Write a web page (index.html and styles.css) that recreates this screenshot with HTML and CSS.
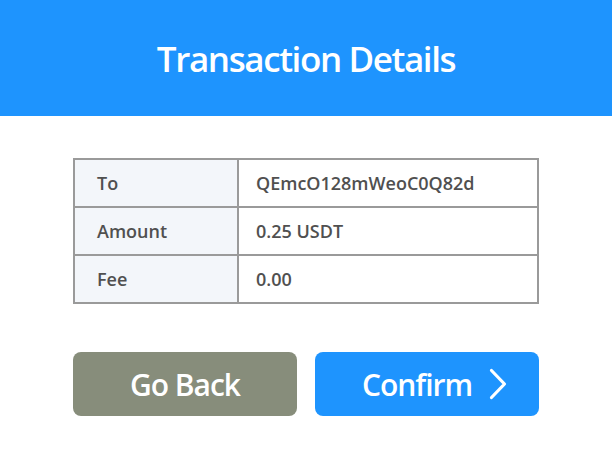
FILE: index.html
```html
<!DOCTYPE html>
<html lang="en">
<head>
<meta charset="utf-8">
<title>Transaction Details</title>
<link rel="stylesheet" href="styles.css">
</head>
<body>
<header class="topbar">
  <h1 class="title">Transaction Details</h1>
</header>
<main class="content">
  <table class="details">
    <tr><th>To</th><td>QEmcO128mWeoC0Q82d</td></tr>
    <tr><th>Amount</th><td>0.25 USDT</td></tr>
    <tr><th>Fee</th><td>0.00</td></tr>
  </table>
  <div class="actions">
    <button class="btn btn-back" type="button">Go Back</button>
    <button class="btn btn-confirm" type="button">
      <span>Confirm</span>
      <svg class="chev" width="18" height="32" viewBox="0 0 18 32" aria-hidden="true">
        <path d="M2.5 2.5 L15.5 16 L2.5 29.5" fill="none" stroke="#fff" stroke-width="3.2" stroke-linecap="round" stroke-linejoin="round"/>
      </svg>
    </button>
  </div>
</main>
</body>
</html>
```

FILE: styles.css
```css
html, body {
  margin: 0;
  padding: 0;
  background: #fff;
  font-family: "Open Sans", "Liberation Sans", sans-serif;
}

.topbar {
  height: 116px;
  background: #1e94fe;
  display: flex;
  align-items: center;
  justify-content: center;
}

.title {
  margin: 0;
  color: #fff;
  font-size: 35px;
  font-weight: 600;
  letter-spacing: -1.4px;
}

.content {
  padding: 42px 73px 0 73px;
  display: flex;
  flex-direction: column;
}

.details {
  width: 466px;
  border-collapse: collapse;
  border: 2px solid #9a9a9a;
  color: #505050;
  font-size: 18px;
  font-weight: 600;
}

.details th,
.details td {
  height: 46px;
  padding: 0 0 0 22px;
  border: 2px solid #9a9a9a;
  text-align: left;
  font-weight: 600;
}

.details th {
  width: 140px;
  background: #f3f6fa;
}

.details td {
  padding-left: 17px;
  background: #fff;
}

.actions {
  margin-top: 48px;
  display: flex;
  gap: 18px;
}

.btn {
  width: 224px;
  height: 64px;
  border: 0;
  border-radius: 8px;
  color: #fff;
  font-family: inherit;
  font-size: 30px;
  font-weight: 600;
  letter-spacing: -1px;
  display: flex;
  align-items: center;
  justify-content: center;
  padding: 0;
}

.btn-back {
  background: #878d7b;
}

.btn-confirm {
  background: #1e94fe;
  gap: 17px;
  padding-left: 15px;
}

.chev {
  display: block;
}
```
